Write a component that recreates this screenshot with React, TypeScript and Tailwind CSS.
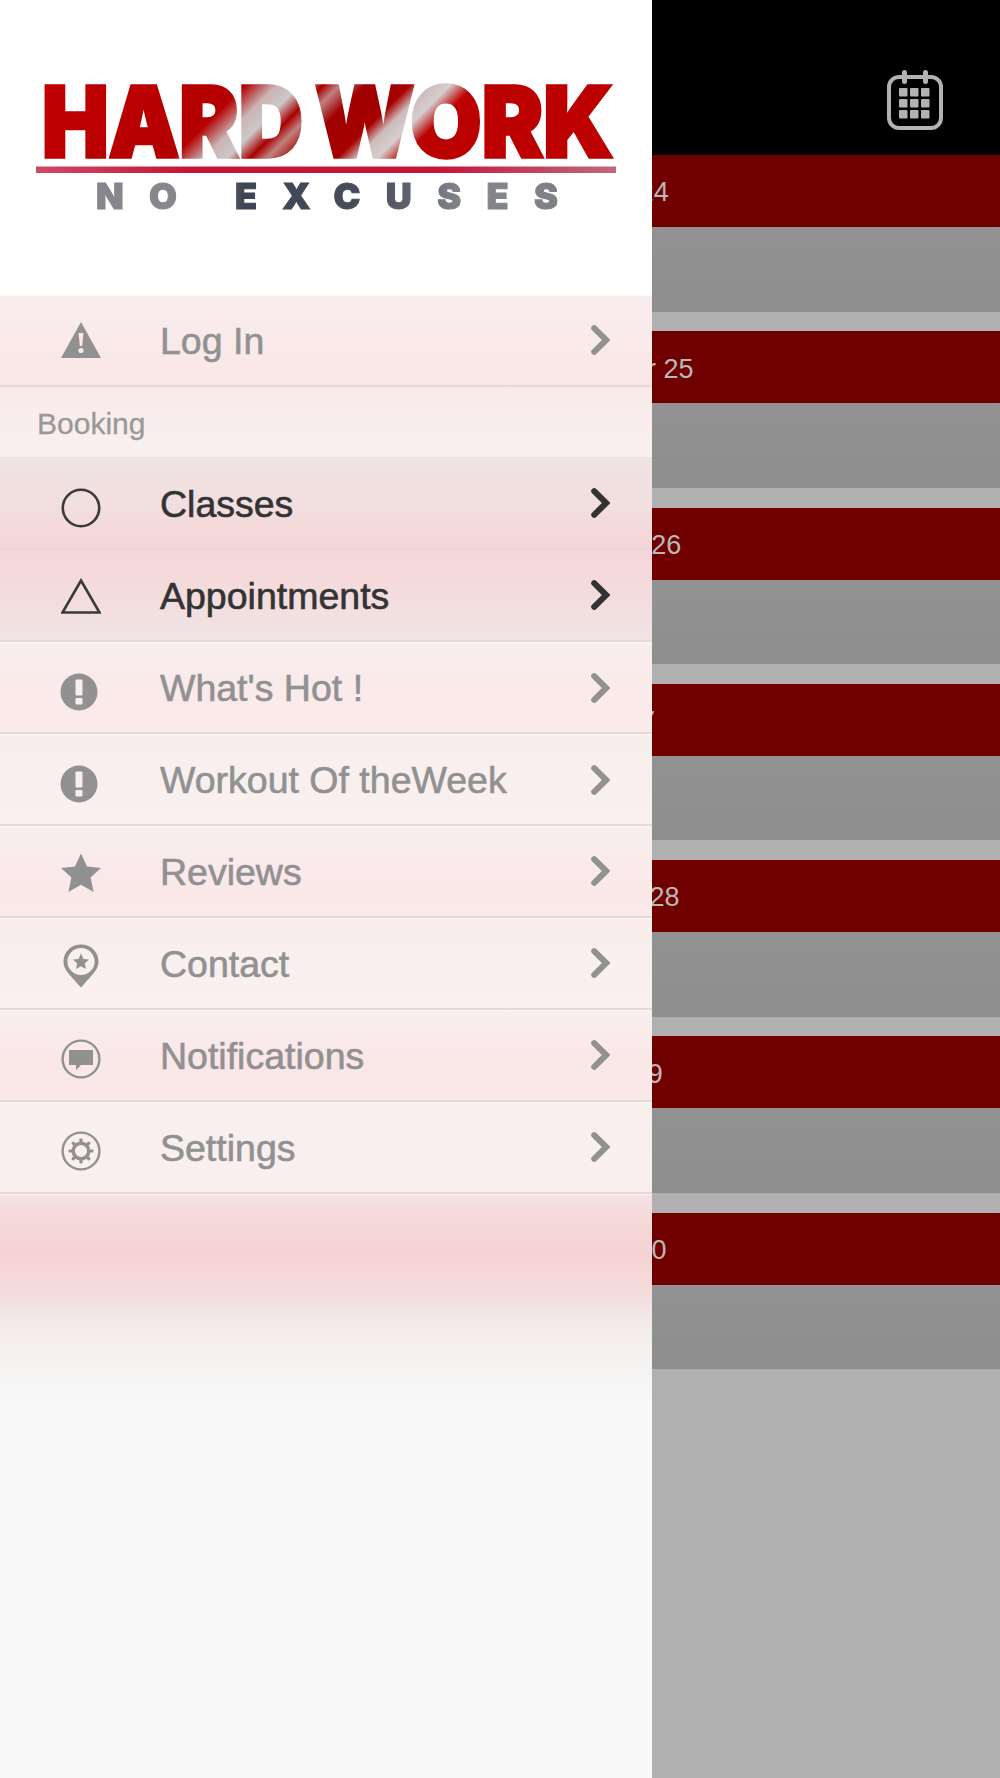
const sans = "font-['Liberation_Sans',Arial,sans-serif]";

const days = [
  { label: "Tuesday, November 24", pad: "pl-[60px]" },
  { label: "Wednesday, November 25", pad: "pl-[70px]" },
  { label: "Thursday, November 26", pad: "pl-[75px]" },
  { label: "Friday, November 27", pad: "pl-[60px]" },
  { label: "Saturday, November 28", pad: "pl-[76px]" },
  { label: "Sunday, November 29", pad: "pl-[59px]" },
  { label: "Monday, November 30", pad: "pl-[62px]" },
];

function Logo() {
  return (
    <svg viewBox="0 0 652 295" className="block w-[652px] h-[295px] blur-[0.4px]">
      <defs>
        <linearGradient id="gloss" gradientUnits="userSpaceOnUse" x1="100" y1="40" x2="600" y2="540">
          <stop offset="0" stopColor="#c00000" />
          <stop offset="0.19" stopColor="#b40000" />
          <stop offset="0.222" stopColor="#c9b4b4" />
          <stop offset="0.245" stopColor="#cdc8c8" />
          <stop offset="0.268" stopColor="#a80000" />
          <stop offset="0.285" stopColor="#c08080" />
          <stop offset="0.31" stopColor="#a00000" />
          <stop offset="0.355" stopColor="#a60000" />
          <stop offset="0.375" stopColor="#cdbcbc" />
          <stop offset="0.395" stopColor="#d6cfcf" />
          <stop offset="0.42" stopColor="#bb0000" />
          <stop offset="1" stopColor="#c00000" />
        </linearGradient>
        <linearGradient id="bar" x1="0" y1="0" x2="1" y2="0">
          <stop offset="0" stopColor="#d04a64" />
          <stop offset="0.25" stopColor="#c4183a" />
          <stop offset="0.7" stopColor="#c4183a" />
          <stop offset="1" stopColor="#c06a7e" />
        </linearGradient>
        <linearGradient id="slate" gradientUnits="userSpaceOnUse" x1="96" y1="0" x2="558" y2="0">
          <stop offset="0" stopColor="#85878d" />
          <stop offset="0.22" stopColor="#85878d" />
          <stop offset="0.32" stopColor="#3e4552" />
          <stop offset="0.6" stopColor="#474d5a" />
          <stop offset="0.8" stopColor="#85878d" />
          <stop offset="1" stopColor="#7d8087" />
        </linearGradient>
      </defs>
      <text x="42" y="157" fontFamily="Inter, sans-serif" fontWeight="900" fontSize="98" fill="url(#gloss)" stroke="url(#gloss)" strokeWidth="3.5" textLength="261" lengthAdjust="spacingAndGlyphs">HARD</text>
      <text x="315" y="157" fontFamily="Inter, sans-serif" fontWeight="900" fontSize="98" fill="url(#gloss)" stroke="url(#gloss)" strokeWidth="3.5" textLength="298" lengthAdjust="spacingAndGlyphs">WORK</text>
      <rect x="36" y="166.5" width="580" height="6.5" fill="url(#bar)" />
      <text x="96" y="208.5" fontFamily="Inter, sans-serif" fontWeight="900" fontSize="36" fill="url(#slate)" stroke="url(#slate)" strokeWidth="1" textLength="462">NO EXCUSES</text>
    </svg>
  );
}

function Chevron({ color }: { color: string }) {
  return (
    <svg width="19" height="30" viewBox="0 0 19 30" className="shrink-0">
      <path d="M3.2 3.2 L15.2 15 L3.2 26.8" fill="none" stroke={color} strokeWidth="6" strokeLinecap="round" strokeLinejoin="miter" />
    </svg>
  );
}

const grey = "#919191";

function WarningIcon() {
  return (
    <svg width="40" height="36" viewBox="0 0 40 36">
      <path d="M20 0 L40 36 L0 36 Z" fill={grey} />
      <path d="M17.6 11 H22.4 L21.2 24 H18.8 Z" fill="#fae9e9" />
      <circle cx="20" cy="28.5" r="2.6" fill="#fae9e9" />
    </svg>
  );
}

function CircleIcon() {
  return (
    <svg width="40" height="40" viewBox="0 0 40 40" className="translate-y-[5px]">
      <circle cx="20" cy="20" r="18.2" fill="none" stroke="#3a3a3a" strokeWidth="2.6" />
    </svg>
  );
}

function TriangleIcon() {
  return (
    <svg width="40" height="36" viewBox="0 0 40 36" className="translate-y-[1px]">
      <path d="M20 2.5 L38.5 34.5 H1.5 Z" fill="none" stroke="#3a3a3a" strokeWidth="2.6" />
    </svg>
  );
}

function AlertIcon() {
  return (
    <svg width="38" height="38" viewBox="0 0 38 38" className="translate-y-[4px] -translate-x-[1px]">
      <circle cx="19" cy="19" r="18.5" fill={grey} />
      <rect x="15.5" y="6.5" width="7" height="16" rx="1" fill="#f9eded" />
      <rect x="15.5" y="25" width="7" height="6.5" rx="1" fill="#f9eded" />
    </svg>
  );
}

function StarIcon() {
  return (
    <svg width="40" height="40" viewBox="0 0 40 40" className="translate-y-[2px]">
      <path d="M20 0.5 L26 13.5 L40 15 L29.6 24.6 L32.6 39 L20 31.8 L7.4 39 L10.4 24.6 L0 15 L14 13.5 Z" fill={grey} />
    </svg>
  );
}

function PinIcon() {
  return (
    <svg width="36" height="44" viewBox="0 0 36 44" className="translate-x-[2px] translate-y-[3px]">
      <path d="M18 0.5 C8 0.5 0.5 8 0.5 17.5 C0.5 25 5 29 18 43.5 C31 29 35.5 25 35.5 17.5 C35.5 8 28 0.5 18 0.5 Z" fill={grey} />
      <circle cx="18" cy="17.5" r="13.6" fill="#f8efee" />
      <path d="M18 9.5 L20.4 15 L26 15.6 L21.8 19.4 L23 25 L18 22.2 L13 25 L14.2 19.4 L10 15.6 L15.6 15 Z" fill={grey} />
    </svg>
  );
}

function BubbleIcon() {
  return (
    <svg width="40" height="40" viewBox="0 0 40 40" className="translate-y-[4px]">
      <circle cx="20" cy="20" r="18.4" fill="none" stroke={grey} strokeWidth="2.4" />
      <path d="M8 11 H32 V26 H20 L15 31 V26 H8 Z" fill={grey} />
    </svg>
  );
}

function GearIcon() {
  const teeth = [0, 45, 90, 135];
  return (
    <svg width="40" height="40" viewBox="0 0 40 40" className="translate-y-[4px]">
      <circle cx="20" cy="20" r="18.4" fill="none" stroke={grey} strokeWidth="2.4" />
      {teeth.map((deg) => (
        <rect key={deg} x="18.4" y="7.5" width="3.2" height="25" rx="1" fill={grey} transform={`rotate(${deg} 20 20)`} />
      ))}
      <circle cx="20" cy="20" r="7.8" fill="#f8efee" stroke={grey} strokeWidth="3.4" />
    </svg>
  );
}

function CalendarIcon() {
  const cells = [0, 1, 2, 3, 4, 5, 6, 7, 8];
  return (
    <svg width="56" height="60" viewBox="0 0 56 60">
      <rect x="2" y="7" width="52" height="51" rx="10" fill="none" stroke="#b2b2b2" strokeWidth="4" />
      <rect x="15" y="0" width="5" height="14" rx="2.5" fill="#b2b2b2" />
      <rect x="36" y="0" width="5" height="14" rx="2.5" fill="#b2b2b2" />
      {cells.map((i) => (
        <rect key={i} x={12 + (i % 3) * 11} y={18 + Math.floor(i / 3) * 11} width="8.5" height="8.5" rx="1" fill="#b2b2b2" />
      ))}
    </svg>
  );
}

const items = [
  { label: "Classes", icon: <CircleIcon />, bg: "from-[#efe3e3] via-[#f2dfdf] to-[#f6d5d7]", active: true },
  { label: "Appointments", icon: <TriangleIcon />, bg: "from-[#f6d6d8] via-[#f4dcdd] to-[#f0e4e4]", active: true },
  { label: "What's Hot !", icon: <AlertIcon />, bg: "from-[#f8eeee] via-[#faeaea] to-[#faeaea]" },
  { label: "Workout Of theWeek", icon: <AlertIcon />, bg: "from-[#f9eded] via-[#f8f0ef] to-[#f8f1f0]" },
  { label: "Reviews", icon: <StarIcon />, bg: "from-[#f8efee] via-[#fae9ea] to-[#fbe8e9]" },
  { label: "Contact", icon: <PinIcon />, bg: "from-[#f9ecec] via-[#f8f0ef] to-[#f8f1f0]" },
  { label: "Notifications", icon: <BubbleIcon />, bg: "from-[#f8eeee] via-[#fae8e9] to-[#fae7e8]" },
  { label: "Settings", icon: <GearIcon />, bg: "from-[#f8eeee] via-[#f8f0ef] to-[#f8efee]" },
];

function Row({ label, icon, bg, active }: { label: string; icon: React.ReactNode; bg: string; active?: boolean }) {
  return (
    <div className={`flex items-center h-[91.9px] border-b-2 border-b-[#e3d9d9] bg-linear-to-b ${active ? "" : "border-t border-t-[#fdf6f6]"} ${bg}`}>
      <div className="w-[160px] pl-[61px] flex items-center shrink-0">{icon}</div>
      <span className={`flex-1 text-[37.5px] leading-none pt-[3px] [-webkit-text-stroke:0.6px_currentColor] ${active ? "text-[#333333]" : "text-[#919191]"}`}>
        {label}
      </span>
      <div className="pr-[42px] flex items-center">
        <Chevron color={active ? "#333333" : "#919191"} />
      </div>
    </div>
  );
}

export default function App() {
  return (
    <div className={`relative h-[1778px] w-[1000px] overflow-hidden bg-[#b0b0b0] ${sans}`}>
      {/* page behind the drawer */}
      <div className="h-[155px] bg-black flex justify-end items-center pr-[57px] pt-[44px]">
        <CalendarIcon />
      </div>
      {days.map((d) => (
        <div key={d.label} className="mb-[19.8px] last:mb-0">
          <div className={`h-[72px] bg-[#700000] flex items-center justify-center pt-[3px] text-[27px] text-[#b8b8b8] ${d.pad}`}>
            {d.label}
          </div>
          <div className="h-[84.5px] bg-linear-to-b from-[#929292] to-[#8e8e8e]" />
        </div>
      ))}

      {/* drawer */}
      <div className="absolute left-0 top-0 bottom-0 w-[652px] flex flex-col bg-[#f8f8f8]">
        <div className="h-[295px] bg-white shrink-0">
          <Logo />
        </div>
        <Row
          label="Log In"
          icon={<WarningIcon />}
          bg="from-[#f8eded] via-[#faeaea] to-[#fae6e6]"
        />
        <div className="h-[71.5px] pl-[37px] pt-[3px] flex items-center text-[30px] [-webkit-text-stroke:0.3px_currentColor] text-[#999999] bg-linear-to-b from-[#fae9e9] to-[#f8f1f0] border-b border-[#e9e2e2]">
          Booking
        </div>
        {items.map((it) => (
          <Row key={it.label} {...it} />
        ))}
        <div className="flex-1 border-t border-[#fdf0f0] bg-[linear-gradient(to_bottom,#f5e2e1_0px,#f6dadb_17px,#f6d3d2_57px,#f5dbdc_97px,#f3e9e8_127px,#f4f2f0_157px,#f8f8f8_207px)]" />
      </div>
    </div>
  );
}
